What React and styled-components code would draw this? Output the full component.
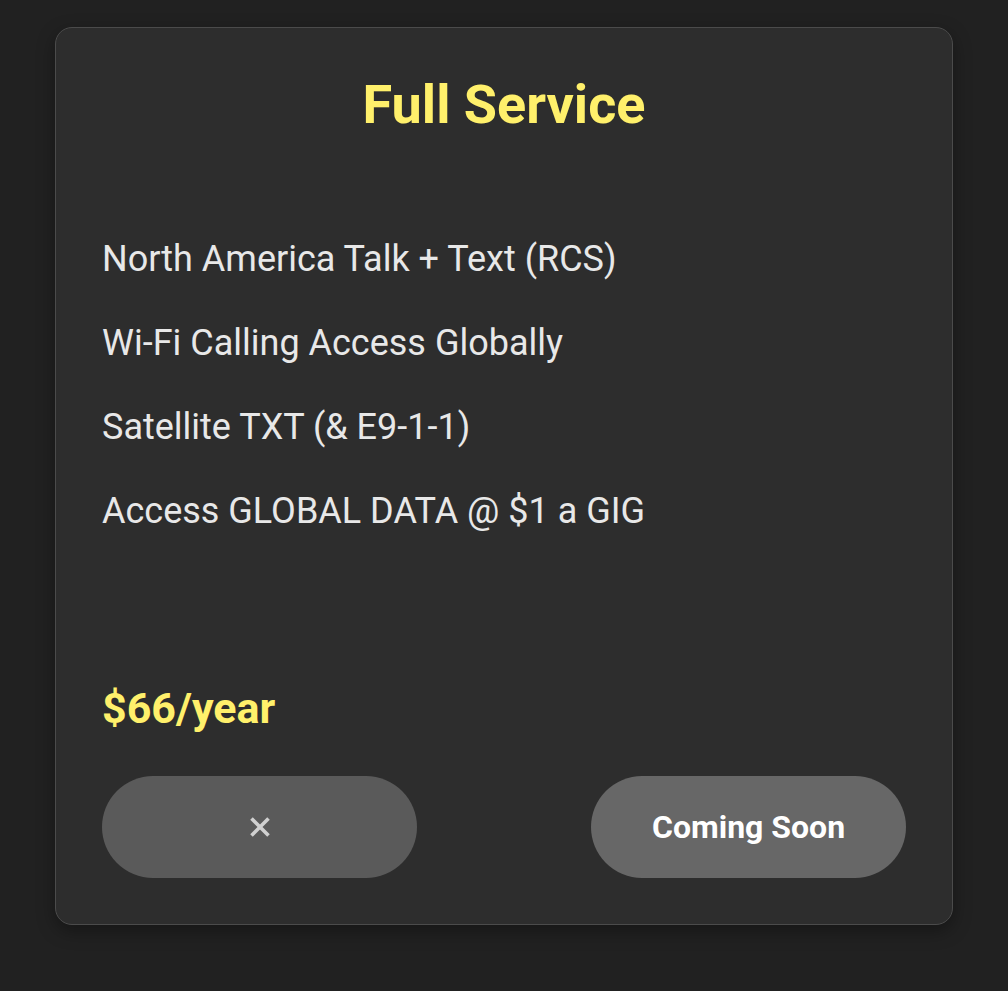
import React from 'react'
import styled, { createGlobalStyle } from 'styled-components'

const GlobalStyle = createGlobalStyle`
    html, body {
        margin: 0;
        padding: 0;
        background-color: #212121;
        font-family: Roboto, "Noto Sans", sans-serif;
    }
`

const features = [
    'North America Talk + Text (RCS)',
    'Wi-Fi Calling Access Globally',
    'Satellite TXT (& E9-1-1)',
    'Access GLOBAL DATA @ $1 a GIG',
]

function App() {
    return (
        <Page>
            <GlobalStyle />
            <Card>
                <Title>Full Service</Title>
                <FeatureList>
                    {features.map(f => <Feature key={f}>{f}</Feature>)}
                </FeatureList>
                <Price>$66/year</Price>
                <Actions>
                    <PillButton $tone="#5a5a5a" aria-label="Close">
                        <svg width="22" height="22" viewBox="0 0 22 22">
                            <path d="M2.5 2.5 L19.5 19.5 M19.5 2.5 L2.5 19.5" stroke="#d0d0d0" strokeWidth="3.6" />
                        </svg>
                    </PillButton>
                    <PillButton $tone="#676767">Coming Soon</PillButton>
                </Actions>
            </Card>
        </Page>
    )
}

const Page = styled.div`
    min-height: 991px;
    padding-top: 27px;
    box-sizing: border-box;
`

const Card = styled.div`
    width: 898px;
    height: 898px;
    margin: 0 auto;
    box-sizing: border-box;
    padding: 46px;
    background-color: #2d2d2d;
    border: 1.5px solid #4b4b4b;
    border-radius: 17px;
    box-shadow: 0 6px 18px rgba(0, 0, 0, 0.35);
    display: flex;
    flex-direction: column;
`

const Title = styled.h1`
    margin: 0;
    text-align: center;
    color: #fff06b;
    font-size: 54px;
    font-weight: 700;
    line-height: 62px;
`

const FeatureList = styled.ul`
    list-style: none;
    margin: 99px 0 0;
    padding: 0;
    display: flex;
    flex-direction: column;
    gap: 36px;
`

const Feature = styled.li`
    color: #e8e8e8;
    font-size: 36px;
    line-height: 48px;
`

const Price = styled.div`
    margin-top: auto;
    color: #fff06b;
    font-size: 43px;
    font-weight: 700;
    line-height: 46px;
`

const Actions = styled.div`
    margin-top: 45px;
    display: flex;
    justify-content: space-between;
`

const PillButton = styled.button`
    width: 315px;
    height: 102px;
    border: none;
    border-radius: 51px;
    background-color: ${p => p.$tone};
    color: #ffffff;
    font-family: Roboto, "Noto Sans", sans-serif;
    font-size: 32px;
    font-weight: 700;
    display: flex;
    align-items: center;
    justify-content: center;
    cursor: pointer;
`

export default App
